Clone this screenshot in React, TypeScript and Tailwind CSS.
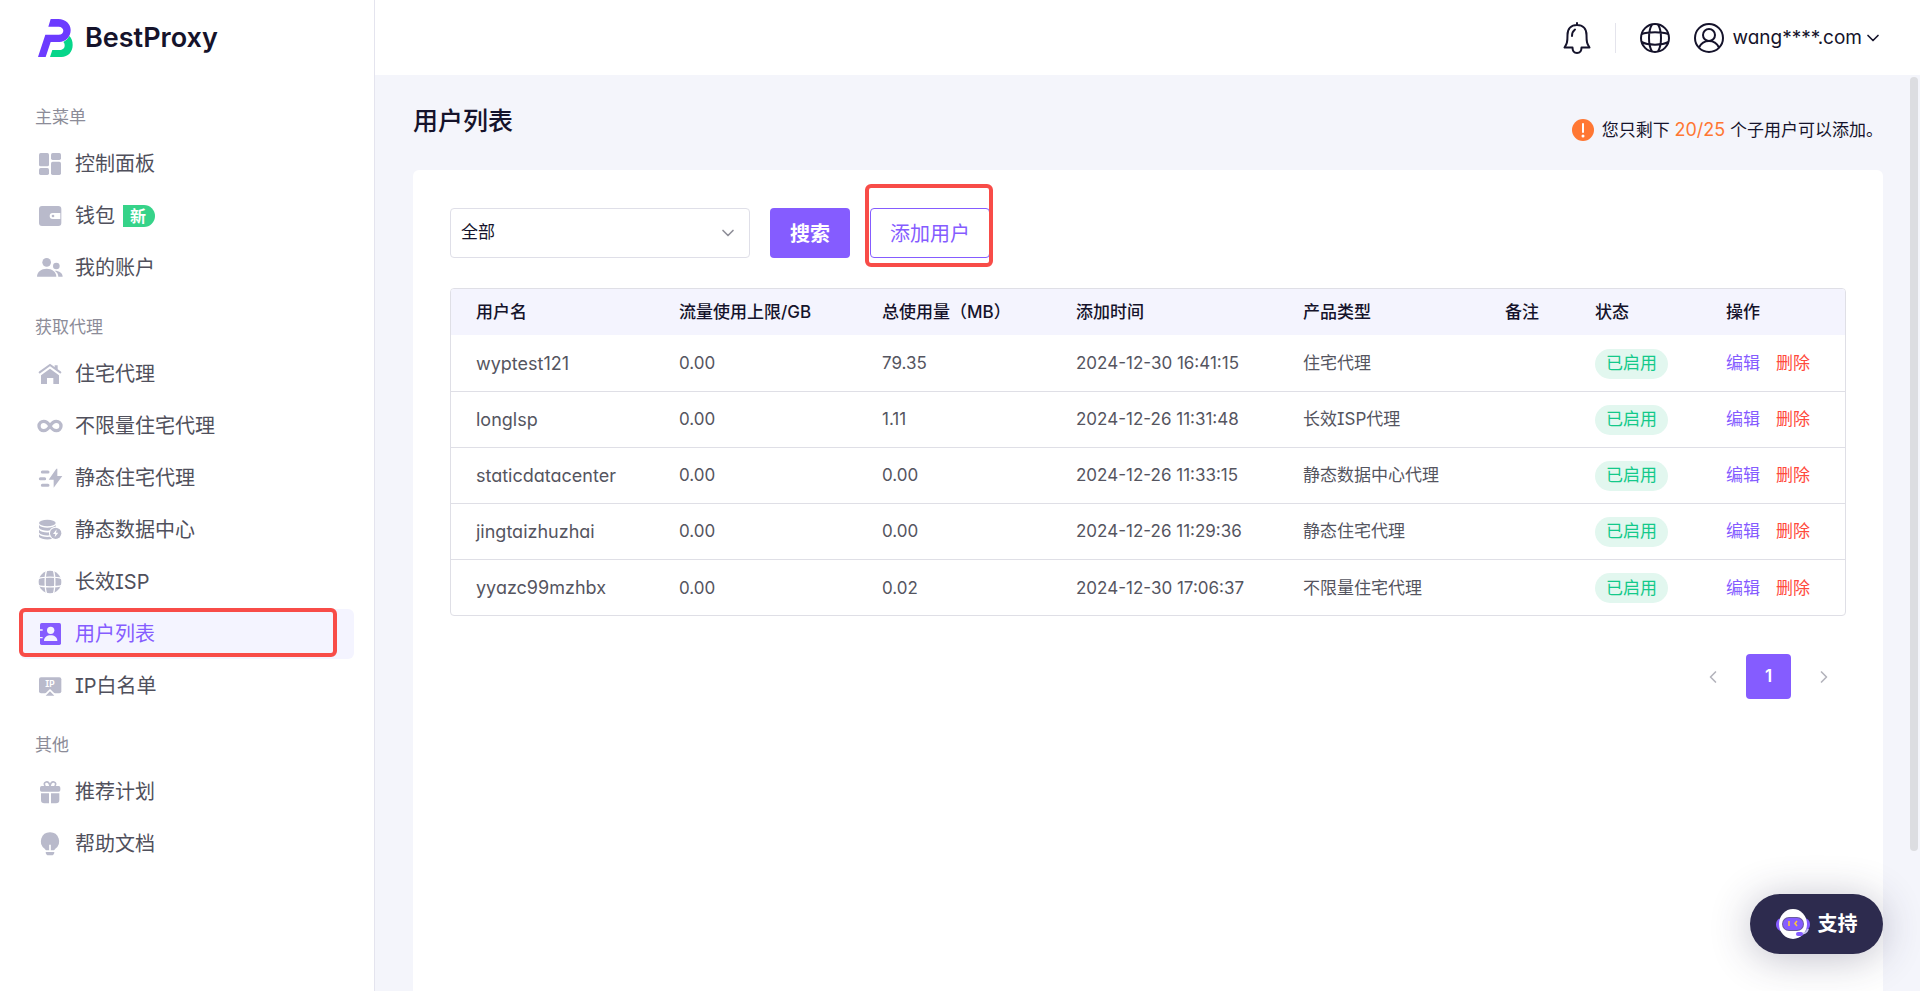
import type { ReactNode } from 'react'
import { ChevronDown, ChevronLeft, ChevronRight } from 'lucide-react'

type NavItem = {
  label: string
  icon: ReactNode
  badge?: string
  active?: boolean
}

type NavGroup = {
  title: string
  items: NavItem[]
}

const icons = {
  dashboard: (
    <>
      <rect x="3" y="3" width="30" height="40" rx="5" />
      <rect x="3" y="48" width="30" height="21" rx="5" />
      <rect x="39" y="3" width="30" height="21" rx="5" />
      <rect x="39" y="29" width="30" height="40" rx="5" />
    </>
  ),
  wallet: (
    <>
      <rect x="3" y="6" width="67" height="60" rx="9" />
      <path d="M44 27H67V45H44A9 9 0 0 1 44 27Z" fill="#fff" />
      <circle cx="45" cy="36" r="4" />
    </>
  ),
  users: (
    <>
      <circle cx="26" cy="19" r="13" />
      <path d="M-3 62C-3 47 10 38 26 38S55 47 55 62Z" />
      <circle cx="55" cy="30" r="10" />
      <path d="M50 44C64 44 74 51 74 62H61C61 54 57 48 50 44Z" />
    </>
  ),
  home: (
    <>
      <path d="M5 31L36 9L67 31" fill="none" stroke="currentColor" strokeWidth="6" strokeLinecap="round" />
      <path d="M50 10H59V24L50 18Z" />
      <path d="M9 66V40L36 20L63 40V66H46V48H27V66Z" />
    </>
  ),
  infinity: (
    <path
      d="M36 36C30 26 25 22 17 22A14 14 0 0 0 17 50C25 50 30 46 36 36C42 26 47 22 55 22A14 14 0 0 1 55 50C47 50 42 46 36 36Z"
      fill="none"
      stroke="currentColor"
      strokeWidth="10"
    />
  ),
  bolt: (
    <>
      <path d="M13 18H30M7 38H20M13 58H30" fill="none" stroke="currentColor" strokeWidth="9" strokeLinecap="round" />
      <path d="M55 8L32 41H47V65L73 30H58V8Z" />
    </>
  ),
  database: (
    <>
      <ellipse cx="28" cy="15" rx="25" ry="10" />
      <path d="M3 21C10 32 46 32 53 21V30C44 41 12 41 3 30Z" />
      <path d="M3 35C10 46 46 46 53 35V44C44 55 12 55 3 44Z" />
      <path d="M3 49C10 60 46 60 53 49V57C44 67 12 67 3 57Z" />
      <circle cx="53" cy="46" r="20" fill="#fff" />
      <circle cx="53" cy="46" r="17" />
      <path d="M56 34L45 48H52L50 58L61 44H54Z" fill="#fff" />
    </>
  ),
  globe: (
    <>
      <circle cx="36" cy="36" r="34" />
      <path
        d="M26 0C20 16 20 56 26 72M46 0C52 16 52 56 46 72M0 26C16 20 56 20 72 26M0 46C16 52 56 52 72 46"
        fill="none"
        stroke="#fff"
        strokeWidth="4"
      />
    </>
  ),
  contacts: (
    <>
      <rect x="6" y="3" width="63" height="66" rx="5" />
      <path d="M4 24H14M4 47H14" stroke="#f4f4ff" strokeWidth="4" />
      <circle cx="38" cy="25" r="11" fill="#f4f4ff" />
      <path d="M18 57C18 46 27 40 38 40S58 46 58 57Z" fill="#f4f4ff" />
    </>
  ),
  whitelist: (
    <>
      <rect x="3" y="10" width="67" height="48" rx="6" />
      <path d="M14 66L36 45L58 66Z" fill="#fff" />
      <path d="M23 65L36 52L49 65Z" />
      <text x="36" y="39" fontSize="25" fontWeight="700" textAnchor="middle" fill="#fff">
        IP
      </text>
    </>
  ),
  gift: (
    <>
      <path
        d="M36 18C34 8 29 5 24 6C17 8 18 15 22 18M36 18C38 8 43 5 48 6C55 8 54 15 50 18"
        fill="none"
        stroke="currentColor"
        strokeWidth="5"
      />
      <rect x="6" y="18" width="61" height="17" rx="5" />
      <path d="M9 40H33V70H19A10 10 0 0 1 9 60Z" />
      <path d="M39 40H64V60A10 10 0 0 1 54 70H39Z" />
    </>
  ),
  bulb: (
    <>
      <path d="M36 1A27 27 0 0 1 52 50C50 52 49 54 48 55H24C23 54 22 52 20 50A27 27 0 0 1 36 1Z" />
      <path d="M36 38V56" stroke="#fff" strokeWidth="5" />
      <path d="M23 60H49C49 67 45 70 41 70H31C27 70 23 67 23 60Z" />
    </>
  ),
}

const navGroups: NavGroup[] = [
  {
    title: '主菜单',
    items: [
      { label: '控制面板', icon: icons.dashboard },
      { label: '钱包', icon: icons.wallet, badge: '新' },
      { label: '我的账户', icon: icons.users },
    ],
  },
  {
    title: '获取代理',
    items: [
      { label: '住宅代理', icon: icons.home },
      { label: '不限量住宅代理', icon: icons.infinity },
      { label: '静态住宅代理', icon: icons.bolt },
      { label: '静态数据中心', icon: icons.database },
      { label: '长效ISP', icon: icons.globe },
      { label: '用户列表', icon: icons.contacts, active: true },
      { label: 'IP白名单', icon: icons.whitelist },
    ],
  },
  {
    title: '其他',
    items: [
      { label: '推荐计划', icon: icons.gift },
      { label: '帮助文档', icon: icons.bulb },
    ],
  },
]

const users = [
  { name: 'wyptest121', limit: '0.00', used: '79.35', added: '2024-12-30 16:41:15', product: '住宅代理' },
  { name: 'longlsp', limit: '0.00', used: '1.11', added: '2024-12-26 11:31:48', product: '长效ISP代理' },
  { name: 'staticdatacenter', limit: '0.00', used: '0.00', added: '2024-12-26 11:33:15', product: '静态数据中心代理' },
  { name: 'jingtaizhuzhai', limit: '0.00', used: '0.00', added: '2024-12-26 11:29:36', product: '静态住宅代理' },
  { name: 'yyazc99mzhbx', limit: '0.00', used: '0.02', added: '2024-12-30 17:06:37', product: '不限量住宅代理' },
]

function Logo() {
  return (
    <a href="#" className="flex h-[38px] items-center gap-3 pl-[38px] text-[#15132b]">
      <svg viewBox="114 57 105 114" className="h-[38px] w-[35px]">
        <path
          d="M208 108C215 115 218 124 218 135C218 156 204 171 184 171H150L157 150H178C188 150 194 144 194 137C194 132 193 129 190 126C198 122 204 116 208 108Z"
          fill="#06d68a"
        />
        <path
          d="M152 57H175C197 57 212 72 212 90C212 110 197 126 178 126H152L137 171H114L136 104H176C184 104 190 99 190 92C190 85 184 80 176 80H145Z"
          fill="#6c3bff"
        />
      </svg>
      <span className="text-[27px] font-semibold">BestProxy</span>
    </a>
  )
}

function Sidebar() {
  return (
    <aside className="w-[375px] shrink-0 border-r border-[#e4e4ee] bg-white pt-[19px]">
      <Logo />
      <nav className="mt-11 flex flex-col gap-[18px] pr-5 pl-5">
        {navGroups.map((group) => (
          <div key={group.title}>
            <h2 className="mb-[6px] pl-[15px] text-[17px] leading-8 text-[#8c8c98]">{group.title}</h2>
            <ul className="flex flex-col gap-[2px]">
              {group.items.map((item) => (
                <li key={item.label} className="relative">
                  <a
                    href="#"
                    className={
                      item.active
                        ? 'flex h-[50px] items-center rounded-md bg-[#f4f4ff] pl-[18px] text-[20px] text-[#855cff]'
                        : 'flex h-[50px] items-center rounded-md pl-[18px] text-[20px] text-[#50505c]'
                    }
                  >
                    <svg
                      viewBox="0 0 72 72"
                      fill="currentColor"
                      className={item.active ? 'size-6 overflow-visible' : 'size-6 overflow-visible text-[#b9bacb]'}
                    >
                      {item.icon}
                    </svg>
                    <span className="ml-[13px]">{item.label}</span>
                    {item.badge && (
                      <span className="ml-2 flex h-[22px] w-8 items-center rounded-r-full bg-[#36d389] pl-[7px] text-[16px] font-semibold text-white">
                        {item.badge}
                      </span>
                    )}
                  </a>
                  {item.active && (
                    <span className="pointer-events-none absolute -top-px right-[17px] bottom-[2px] -left-px rounded-md border-4 border-[#f84c48]" />
                  )}
                </li>
              ))}
            </ul>
          </div>
        ))}
      </nav>
    </aside>
  )
}

function Header() {
  return (
    <header className="flex h-[75px] shrink-0 items-center justify-end bg-white pr-[37px] text-[#15132b]">
      <button aria-label="通知">
        <svg viewBox="0 0 28 32" fill="none" stroke="currentColor" strokeWidth="2" className="h-8 w-7" strokeLinejoin="round" strokeLinecap="round">
          <path d="M14 1V3M14 3C8 3 4.500 7 4.500 13C4.500 20 4 22 1.500 25.500H9.500C9.500 29 11.500 31 14 31S18.500 29 18.500 25.500H26.500C24 22 23.500 20 23.500 13C23.500 7 20 3 14 3Z" />
          <path d="M9 14C9 11 10 9 12 7.500" />
        </svg>
      </button>
      <span className="mx-6 h-[30px] w-px bg-[#e4e4ec]" />
      <button aria-label="语言">
        <svg viewBox="0 0 30 30" fill="none" stroke="currentColor" strokeWidth="2" className="size-[30px]">
          <circle cx="15" cy="15" r="14" />
          <path d="M12 1.500C8 8 8 22 12 28.500M18 1.500C22 8 22 22 18 28.500M1.500 11C8 8.500 22 8.500 28.500 11M1.500 19C8 22.500 22 22.500 28.500 19" />
        </svg>
      </button>
      <button className="ml-6 flex items-center text-[19px]">
        <svg viewBox="0 0 30 30" fill="none" stroke="currentColor" strokeWidth="2" className="size-[30px]">
          <circle cx="15" cy="15" r="14" />
          <circle cx="15" cy="12" r="6" />
          <path d="M5 24.500C7 20.500 10.500 18 15 18S23 20.500 25 24.500" />
        </svg>
        <span className="ml-2 pt-0.5">wang****.com</span>
        <ChevronDown className="ml-px size-5" />
      </button>
    </header>
  )
}

function Filters() {
  return (
    <div className="flex gap-5">
      <div className="relative w-[300px]">
        <select
          aria-label="用户"
          className="h-[50px] w-full appearance-none rounded border border-[#dfdfe8] bg-white pl-[10px] text-[17px] text-[#15132b]"
        >
          <option>全部</option>
        </select>
        <ChevronDown className="pointer-events-none absolute top-[15px] right-3 size-5 text-[#8f8f99]" />
      </div>
      <button className="h-[50px] w-20 rounded bg-[#855cff] pt-0.5 text-[20px] font-semibold text-white">搜索</button>
      <div className="relative">
        <button className="h-[50px] w-[120px] rounded border border-[#855cff] bg-white pt-0.5 text-[20px] text-[#855cff]">
          添加用户
        </button>
        <span className="pointer-events-none absolute -top-6 -right-[3px] -bottom-[9px] -left-[5px] rounded-md border-4 border-[#f84c48]" />
      </div>
    </div>
  )
}

function UserTable() {
  return (
    <div className="mt-[30px] overflow-hidden rounded border border-[#dfdfe6]">
      <table className="w-full table-fixed text-left text-[17px] whitespace-nowrap">
        <thead className="bg-[#f4f4fe] text-[#15132b]">
          <tr className="h-[46px] [&>th]:pt-0.5 [&>th]:pl-[25px] [&>th]:font-medium">
            <th className="w-[203px]">用户名</th>
            <th className="w-[203px]">流量使用上限/GB</th>
            <th className="w-[194px]">总使用量（MB）</th>
            <th className="w-[227px]">添加时间</th>
            <th className="w-[202px]">产品类型</th>
            <th className="w-[90px]">备注</th>
            <th className="w-[131px]">状态</th>
            <th className="w-[144px]">操作</th>
          </tr>
        </thead>
        <tbody className="divide-y divide-[#dfdfe6] text-[#55555f]">
          {users.map((user) => (
            <tr key={user.name} className="h-14 [&>td]:pt-0.5 [&>td]:pl-[25px]">
              <td className="text-lg">{user.name}</td>
              <td>{user.limit}</td>
              <td>{user.used}</td>
              <td>{user.added}</td>
              <td>{user.product}</td>
              <td></td>
              <td>
                <span className="inline-flex h-[30px] items-center rounded-full bg-[#e2f7ef] px-[11px] text-[#13c98a]">
                  已启用
                </span>
              </td>
              <td>
                <div className="flex gap-4">
                  <button className="text-[#855cff]">编辑</button>
                  <button className="text-[#ff4a3d]">删除</button>
                </div>
              </td>
            </tr>
          ))}
        </tbody>
      </table>
    </div>
  )
}

function Pagination() {
  return (
    <div className="mt-[38px] flex items-center justify-end pr-3">
      <button aria-label="上一页" className="text-[#b4b4bc]">
        <ChevronLeft className="size-5" />
      </button>
      <button className="mx-[23px] size-[45px] rounded bg-[#855cff] text-[17px] font-semibold text-white">1</button>
      <button aria-label="下一页" className="text-[#b4b4bc]">
        <ChevronRight className="size-5" />
      </button>
    </div>
  )
}

function SupportButton() {
  return (
    <button className="absolute right-[37px] bottom-[37px] flex h-[60px] w-[133px] items-center justify-center gap-2 rounded-full bg-[#2d2b4e] text-[20px] font-semibold text-white shadow-[0_4px_40px_rgba(45,43,78,0.3)]">
      <svg viewBox="0 0 34 30" className="h-[30px] w-[34px]">
        <rect y="9" width="34" height="13" rx="6" fill="#855cff" />
        <ellipse cx="17" cy="15" rx="14" ry="15" fill="#fff" />
        <rect x="6" y="8" width="22" height="14" rx="7" fill="#6a5c9e" />
        <rect x="7" y="9" width="20" height="12" rx="6" fill="#855cff" />
        <path d="M13 12V17M21 12L19 14.500L21 17" fill="none" stroke="#ffc935" strokeWidth="1.500" />
        <path d="M32 20C31 23 28 25 24 25" fill="none" stroke="#c9c6f2" strokeWidth="2" />
        <rect x="20" y="23" width="7" height="4" rx="2" fill="#855cff" />
      </svg>
      支持
    </button>
  )
}

export default function App() {
  return (
    <div className="relative flex h-screen overflow-hidden bg-[#f4f5fb] font-['Inter','Noto_Sans_CJK_SC',sans-serif] [font-feature-settings:'cv08','cv11']">
      <Sidebar />
      <div className="flex min-w-0 flex-1 flex-col">
        <Header />
        <main className="relative flex min-h-0 flex-1 flex-col pr-[37px] pl-[38px]">
          <div className="flex h-[95px] shrink-0 justify-between text-[#15132b]">
            <h1 className="pt-7 text-[25px] leading-9 font-medium">用户列表</h1>
            <p className="flex h-[110px] items-center text-[17px]">
              <svg viewBox="0 0 22 22" className="mr-2 size-[22px]">
                <circle cx="11" cy="11" r="11" fill="#ff7733" />
                <path d="M11 5V13" stroke="#fff" strokeWidth="2" strokeLinecap="round" />
                <circle cx="11" cy="17" r="1.500" fill="#fff" />
              </svg>
              <span>
                您只剩下 <span className="text-lg text-[#ff7733]">20/25</span> 个子用户可以添加。
              </span>
            </p>
          </div>
          <section className="flex-1 rounded-t-md bg-white px-[37px] pt-[38px]">
            <Filters />
            <UserTable />
            <Pagination />
          </section>
          <span className="absolute top-[2px] right-[2px] h-[774px] max-h-full w-2 rounded-full bg-[#dcdde1]" />
        </main>
      </div>
      <SupportButton />
    </div>
  )
}
